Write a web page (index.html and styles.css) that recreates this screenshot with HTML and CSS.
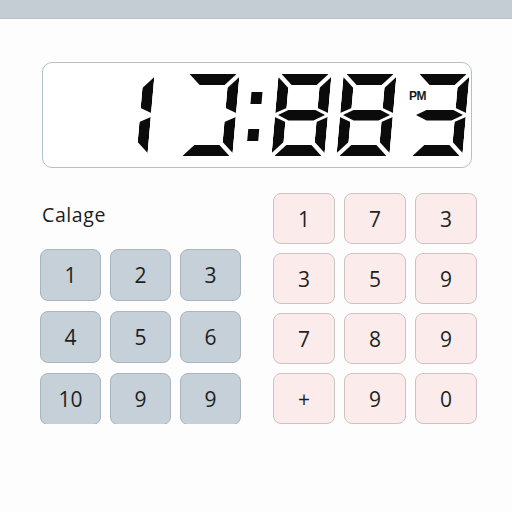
FILE: index.html
```html
<!DOCTYPE html>
<html lang="en">
<head>
    <meta charset="UTF-8">
    <title>Time Card Calculator</title>
    <link rel="stylesheet" href="styles.css">
</head>
<body>
    <header class="top-bar">
        <h1>Time Card Calculator</h1>
    </header>

    <div class="display" aria-label="13:883 PM">
        <div class="digit one">
            <span class="seg b"></span><span class="seg c"></span>
        </div>
        <div class="digit bracket">
            <span class="seg a"></span><span class="seg b"></span><span class="seg c"></span><span class="seg d"></span>
        </div>
        <div class="colon"><span></span><span></span></div>
        <div class="digit after-colon">
            <span class="seg a"></span><span class="seg b"></span><span class="seg c"></span><span class="seg d"></span>
            <span class="seg e"></span><span class="seg f"></span><span class="seg g"></span>
        </div>
        <div class="digit gap-wide">
            <span class="seg a"></span><span class="seg b"></span><span class="seg c"></span><span class="seg d"></span>
            <span class="seg e"></span><span class="seg f"></span><span class="seg g"></span>
        </div>
        <div class="digit last">
            <span class="seg a"></span><span class="seg b"></span><span class="seg c"></span><span class="seg d"></span>
            <span class="seg g"></span>
        </div>
        <span class="ampm">PM</span>
    </div>

    <div class="pads">
        <div class="pad-left">
            <div class="pad-label">Calage</div>
            <div class="keys keys-grey">
                <button>1</button><button>2</button><button>3</button>
                <button>4</button><button>5</button><button>6</button>
                <button>10</button><button>9</button><button>9</button>
            </div>
        </div>
        <div class="keys keys-pink">
            <button>1</button><button>7</button><button>3</button>
            <button>3</button><button>5</button><button>9</button>
            <button>7</button><button>8</button><button>9</button>
            <button>+</button><button>9</button><button>0</button>
        </div>
    </div>
</body>
</html>
```

FILE: styles.css
```css
body {
    margin: 0;
    background-color: #fdfdfd;
    font-family: "Open Sans", Arial, sans-serif;
    color: #1f1f1f;
}
.top-bar {
    height: 18px;
    overflow: hidden;
    background-color: #c3cdd3;
    border-bottom: 1px solid #b9c4ca;
}
.top-bar h1 {
    margin: -51px 0 0 -6px;
    font-size: 54px;
    line-height: 54px;
    font-weight: 700;
    white-space: nowrap;
    letter-spacing: 3px;
    color: #5f6a70;
}
.display {
    position: relative;
    display: flex;
    justify-content: flex-end;
    width: 430px;
    height: 106px;
    box-sizing: border-box;
    margin: 43px 0 0 42px;
    padding: 11px 5px 0 0;
    border: 1.5px solid #b4c1c8;
    border-radius: 10px;
    background-color: #fff;
}
.digit {
    position: relative;
    width: 53px;
    height: 82px;
    margin-left: 14px;
    transform: skewX(-5deg);
}
.digit.one {
    margin-left: 0;
}
.digit.bracket {
    margin-left: 32px;
}
.digit.after-colon {
    margin-left: 15px;
}
.digit.gap-wide {
    margin-left: 12px;
}
.digit.last {
    margin-left: 20px;
}
.seg {
    position: absolute;
    background-color: #0b0b0b;
}
.seg.a {
    top: 0;
    left: 3px;
    right: 3px;
    height: 11px;
    clip-path: polygon(0 0, 100% 0, calc(100% - 11px) 100%, 11px 100%);
}
.seg.g {
    top: 35.5px;
    left: 3px;
    right: 3px;
    height: 11px;
    clip-path: polygon(0 50%, 11px 0, calc(100% - 11px) 0, 100% 50%, calc(100% - 11px) 100%, 11px 100%);
}
.seg.d {
    bottom: 0;
    left: 3px;
    right: 3px;
    height: 11px;
    clip-path: polygon(11px 0, calc(100% - 11px) 0, 100% 100%, 0 100%);
}
.seg.f, .seg.e {
    left: 0;
    width: 11px;
    height: 36px;
}
.seg.b, .seg.c {
    right: 0;
    width: 11px;
    height: 36px;
}
.seg.f {
    top: 3px;
    clip-path: polygon(0 0, 100% 11px, 100% calc(100% - 5px), 0 100%);
}
.seg.e {
    top: 43px;
    clip-path: polygon(0 0, 100% 5px, 100% calc(100% - 11px), 0 100%);
}
.seg.b {
    top: 3px;
    clip-path: polygon(0 11px, 100% 0, 100% 100%, 0 calc(100% - 5px));
}
.seg.c {
    top: 43px;
    clip-path: polygon(0 5px, 100% 0, 100% 100%, 0 calc(100% - 11px));
}
.colon {
    display: flex;
    flex-direction: column;
    margin-left: 13px;
    transform: skewX(-5deg);
}
.colon span {
    width: 11px;
    height: 12px;
    margin-top: 18px;
    background-color: #0b0b0b;
}
.colon span + span {
    margin-top: 25px;
}
.ampm {
    position: absolute;
    left: 366px;
    top: 26px;
    font-family: "Liberation Sans", Arial, sans-serif;
    font-size: 12px;
    font-weight: 700;
    letter-spacing: -0.5px;
    color: #1a1a1a;
}
.pads {
    display: flex;
    align-items: flex-end;
    gap: 32px;
    padding: 25px 0 0 40px;
}
.pad-left {
    margin-bottom: -1px;
}
.pad-label {
    font-size: 19.5px;
    line-height: 24px;
    letter-spacing: 0.6px;
    margin-bottom: 22px;
    padding-left: 2px;
    color: #1c1c1c;
}
.keys {
    display: grid;
    grid-template-columns: repeat(3, 61px);
    gap: 10px 9px;
}
.keys button {
    height: 52px;
    padding: 0;
    border-radius: 8px;
    font-family: "Open Sans", Arial, sans-serif;
    font-size: 21px;
    color: #1f1f1f;
    cursor: pointer;
}
.keys-grey button {
    background-color: #c5d0d8;
    border: 1px solid #a9b5bd;
}
.keys-pink {
    grid-template-columns: repeat(3, 62px);
    gap: 9px 9px;
}
.keys-pink button {
    height: 51px;
    background-color: #fbeceb;
    border: 1px solid #cdc3c3;
}
```
